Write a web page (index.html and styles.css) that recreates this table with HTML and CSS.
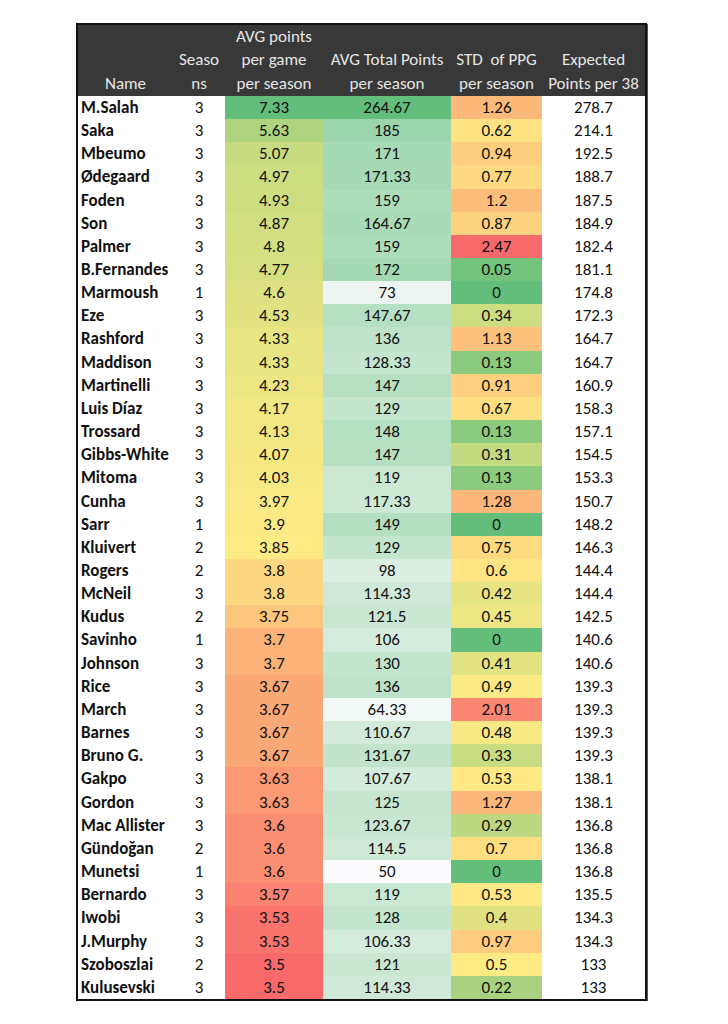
FILE: index.html
```html
<!DOCTYPE html>
<html>
<head>
<meta charset="utf-8">
<link rel="stylesheet" href="styles.css">
</head>
<body>
<table class="sheet">
<colgroup>
<col class="c-name"><col class="c-sea"><col class="c-ppg"><col class="c-tot"><col class="c-std"><col class="c-exp">
</colgroup>
<thead>
<tr>
<th class="h-name">Name</th>
<th>Seaso<br>ns</th>
<th>AVG points<br>per game<br>per season</th>
<th>AVG Total Points<br>per season</th>
<th>STD &nbsp;of PPG<br>per season</th>
<th>Expected<br>Points per 38</th>
</tr>
</thead>
<tbody id="rows">
<tr><td>M.Salah</td><td>3</td><td>7.33</td><td>264.67</td><td>1.26</td><td>278.7</td></tr>
<tr><td>Saka</td><td>3</td><td>5.63</td><td>185</td><td>0.62</td><td>214.1</td></tr>
<tr><td>Mbeumo</td><td>3</td><td>5.07</td><td>171</td><td>0.94</td><td>192.5</td></tr>
<tr><td>Ødegaard</td><td>3</td><td>4.97</td><td>171.33</td><td>0.77</td><td>188.7</td></tr>
<tr><td>Foden</td><td>3</td><td>4.93</td><td>159</td><td>1.2</td><td>187.5</td></tr>
<tr><td>Son</td><td>3</td><td>4.87</td><td>164.67</td><td>0.87</td><td>184.9</td></tr>
<tr><td>Palmer</td><td>3</td><td>4.8</td><td>159</td><td>2.47</td><td>182.4</td></tr>
<tr><td>B.Fernandes</td><td>3</td><td>4.77</td><td>172</td><td>0.05</td><td>181.1</td></tr>
<tr><td>Marmoush</td><td>1</td><td>4.6</td><td>73</td><td>0</td><td>174.8</td></tr>
<tr><td>Eze</td><td>3</td><td>4.53</td><td>147.67</td><td>0.34</td><td>172.3</td></tr>
<tr><td>Rashford</td><td>3</td><td>4.33</td><td>136</td><td>1.13</td><td>164.7</td></tr>
<tr><td>Maddison</td><td>3</td><td>4.33</td><td>128.33</td><td>0.13</td><td>164.7</td></tr>
<tr><td>Martinelli</td><td>3</td><td>4.23</td><td>147</td><td>0.91</td><td>160.9</td></tr>
<tr><td>Luis Díaz</td><td>3</td><td>4.17</td><td>129</td><td>0.67</td><td>158.3</td></tr>
<tr><td>Trossard</td><td>3</td><td>4.13</td><td>148</td><td>0.13</td><td>157.1</td></tr>
<tr><td>Gibbs-White</td><td>3</td><td>4.07</td><td>147</td><td>0.31</td><td>154.5</td></tr>
<tr><td>Mitoma</td><td>3</td><td>4.03</td><td>119</td><td>0.13</td><td>153.3</td></tr>
<tr><td>Cunha</td><td>3</td><td>3.97</td><td>117.33</td><td>1.28</td><td>150.7</td></tr>
<tr><td>Sarr</td><td>1</td><td>3.9</td><td>149</td><td>0</td><td>148.2</td></tr>
<tr><td>Kluivert</td><td>2</td><td>3.85</td><td>129</td><td>0.75</td><td>146.3</td></tr>
<tr><td>Rogers</td><td>2</td><td>3.8</td><td>98</td><td>0.6</td><td>144.4</td></tr>
<tr><td>McNeil</td><td>3</td><td>3.8</td><td>114.33</td><td>0.42</td><td>144.4</td></tr>
<tr><td>Kudus</td><td>2</td><td>3.75</td><td>121.5</td><td>0.45</td><td>142.5</td></tr>
<tr><td>Savinho</td><td>1</td><td>3.7</td><td>106</td><td>0</td><td>140.6</td></tr>
<tr><td>Johnson</td><td>3</td><td>3.7</td><td>130</td><td>0.41</td><td>140.6</td></tr>
<tr><td>Rice</td><td>3</td><td>3.67</td><td>136</td><td>0.49</td><td>139.3</td></tr>
<tr><td>March</td><td>3</td><td>3.67</td><td>64.33</td><td>2.01</td><td>139.3</td></tr>
<tr><td>Barnes</td><td>3</td><td>3.67</td><td>110.67</td><td>0.48</td><td>139.3</td></tr>
<tr><td>Bruno G.</td><td>3</td><td>3.67</td><td>131.67</td><td>0.33</td><td>139.3</td></tr>
<tr><td>Gakpo</td><td>3</td><td>3.63</td><td>107.67</td><td>0.53</td><td>138.1</td></tr>
<tr><td>Gordon</td><td>3</td><td>3.63</td><td>125</td><td>1.27</td><td>138.1</td></tr>
<tr><td>Mac Allister</td><td>3</td><td>3.6</td><td>123.67</td><td>0.29</td><td>136.8</td></tr>
<tr><td>Gündoğan</td><td>2</td><td>3.6</td><td>114.5</td><td>0.7</td><td>136.8</td></tr>
<tr><td>Munetsi</td><td>1</td><td>3.6</td><td>50</td><td>0</td><td>136.8</td></tr>
<tr><td>Bernardo</td><td>3</td><td>3.57</td><td>119</td><td>0.53</td><td>135.5</td></tr>
<tr><td>Iwobi</td><td>3</td><td>3.53</td><td>128</td><td>0.4</td><td>134.3</td></tr>
<tr><td>J.Murphy</td><td>3</td><td>3.53</td><td>106.33</td><td>0.97</td><td>134.3</td></tr>
<tr><td>Szoboszlai</td><td>2</td><td>3.5</td><td>121</td><td>0.5</td><td>133</td></tr>
<tr><td>Kulusevski</td><td>3</td><td>3.5</td><td>114.33</td><td>0.22</td><td>133</td></tr>
</tbody>
</table>
<script src="script.js"></script>
</body>
</html>
```
FILE: styles.css
```css
html, body {
  margin: 0;
  padding: 0;
  background: #ffffff;
}
body {
  padding: 23px 0 0 76px;
  font-family: Carlito, Lato, "Open Sans", sans-serif;
  font-size: 17px;
  color: #111111;
}
.sheet {
  border-collapse: collapse;
  table-layout: fixed;
  border: 2px solid #111111;
  box-shadow: 1px 1px 0 #555555;
}
.c-name { width: 96px; }
.c-sea { width: 52px; }
.c-ppg { width: 98px; }
.c-tot { width: 128px; }
.c-std { width: 91px; }
.c-exp { width: 104px; }
.sheet th {
  background: #383838;
  color: #e6e6e6;
  font-weight: normal;
  line-height: 23.3px;
  vertical-align: bottom;
  text-align: center;
  padding: 0 0 1px;
  white-space: nowrap;
  height: 69px;
}
.sheet td {
  height: 23.15px;
  line-height: 23.15px;
  padding: 0;
  text-align: center;
  white-space: nowrap;
  overflow: hidden;
}
.sheet td:first-child {
  text-align: left;
  font-weight: bold;
  padding-left: 3px;
}
```
FILE: script.js
```js
(function () {
  var rows = document.querySelectorAll('#rows tr');
  function col(i) {
    var a = [];
    rows.forEach(function (r) { a.push(parseFloat(r.cells[i].textContent)); });
    return a;
  }
  function median(a) {
    var s = a.slice().sort(function (x, y) { return x - y; });
    var n = s.length, p = (n - 1) * 0.5, lo = Math.floor(p), hi = Math.ceil(p);
    return s[lo] + (s[hi] - s[lo]) * (p - lo);
  }
  function mix(c1, c2, t) {
    return 'rgb(' + [0, 1, 2].map(function (k) { return Math.round(c1[k] + (c2[k] - c1[k]) * t); }).join(',') + ')';
  }
  var G = [99, 190, 123], Y = [255, 235, 132], R = [248, 105, 107], W = [252, 252, 255];
  function three(i, reverse) {
    var a = col(i), mn = Math.min.apply(null, a), mx = Math.max.apply(null, a), md = median(a);
    var hiC = reverse ? R : G, loC = reverse ? G : R;
    rows.forEach(function (r, k) {
      var v = a[k], c;
      if (v >= md) c = mix(Y, hiC, mx === md ? 0 : (v - md) / (mx - md));
      else c = mix(Y, loC, (md - v) / (md - mn));
      r.cells[i].style.backgroundColor = c;
    });
  }
  function two(i) {
    var a = col(i), mn = Math.min.apply(null, a), mx = Math.max.apply(null, a);
    rows.forEach(function (r, k) {
      r.cells[i].style.backgroundColor = mix(W, G, (a[k] - mn) / (mx - mn));
    });
  }
  three(2, false);
  two(3);
  three(4, true);
})();
```
